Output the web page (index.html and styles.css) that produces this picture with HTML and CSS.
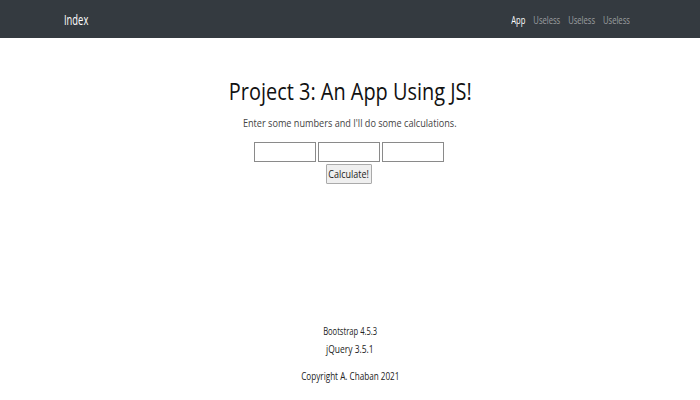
FILE: index.html
```html
<!DOCTYPE html>
<html>
<head>
<meta charset="utf-8">
<link rel="stylesheet" href="styles.css">
</head>
<body>
<div class="page">
  <nav class="navbar">
    <span class="brand">Index</span>
    <ul class="links">
      <li class="active">App</li>
      <li>Useless</li>
      <li>Useless</li>
      <li>Useless</li>
    </ul>
  </nav>
  <main class="main">
    <h1 class="title">Project 3: An App Using JS!</h1>
    <p class="lead">Enter some numbers and I'll do some calculations.</p>
    <div class="inputs">
      <input class="num" type="text">
      <input class="num" type="text">
      <input class="num" type="text">
    </div>
    <button class="calc"><span class="calc-label">Calculate!</span></button>
  </main>
  <footer class="footer">
    <p class="line boot">Bootstrap 4.5.3</p>
    <p class="line jq">jQuery 3.5.1</p>
    <p class="line copy">Copyright A. Chaban 2021</p>
  </footer>
</div>
</body>
</html>
```
FILE: styles.css
```css
html, body { margin: 0; padding: 0; }
body {
  font-family: "Open Sans", "Liberation Sans", sans-serif;
  color: #212529;
  background: #fff;
}
.page { display: flex; flex-direction: column; min-height: 400px; }
.navbar {
  height: 38px;
  background: #343a40;
  display: flex;
  align-items: center;
  justify-content: space-between;
  padding: 0 70px 0 64px;
  box-sizing: border-box;
}
.brand { color: #fff; font-size: 14px; transform: scaleX(0.67); transform-origin: left center; }
.links {
  display: flex; gap: 11.6px; list-style: none; margin: 0; padding: 0;
  font-size: 11px; color: rgba(255,255,255,0.5);
  transform: scaleX(0.69); transform-origin: right center;
}
.links .active { color: #fff; }
.main { display: flex; flex-direction: column; align-items: center; }
.title { font-weight: 400; font-size: 24px; margin: 38px 0 0; line-height: 30px; color: #111; transform: scaleX(0.83); }
.lead { font-size: 11px; margin: 9px 0 0; color: #444; line-height: 16px; transform: scaleX(0.83); }
.inputs { display: flex; gap: 2px; margin: 11px 2px 0 0; }
.num { width: 62px; height: 20px; box-sizing: border-box; border: 1px solid #8a8a8a; padding: 0; margin: 0; background: #fff; }
.calc {
  margin: 2px 2px 0 0; height: 20px; width: 46px; padding: 0;
  font-family: inherit; font-size: 10px; color: #222;
  background: #efefef; border: 1px solid #aaa; border-radius: 1px;
  display: flex; align-items: center; justify-content: center; overflow: hidden;
}
.calc-label { display: inline-block; transform: scaleX(0.9); white-space: nowrap; }
.footer { margin-top: auto; display: flex; flex-direction: column; align-items: center; padding-bottom: 15px; }
.line { margin: 0; font-size: 11px; line-height: 18px; color: #222; }
.boot { transform: scaleX(0.69); }
.jq { transform: scaleX(0.77); }
.copy { margin-top: 9px; transform: scaleX(0.74); }
```
